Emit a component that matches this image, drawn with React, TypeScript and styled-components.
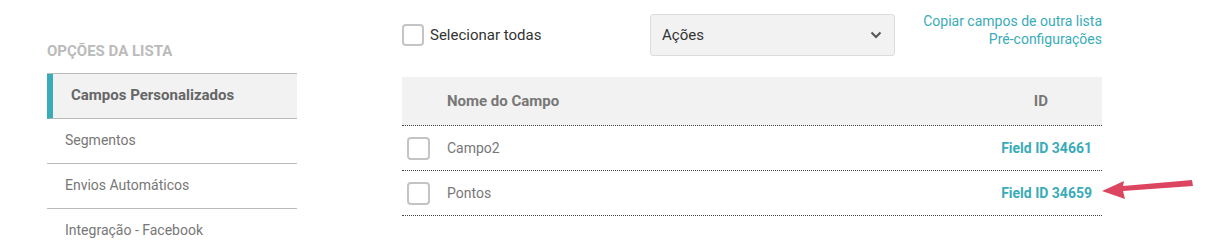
import React from "react";
import styled, { createGlobalStyle } from "styled-components";

const Global = createGlobalStyle`
  html, body { margin: 0; padding: 0; background: #fff; }
  body { font-family: Roboto, "Liberation Sans", Arial, sans-serif; }
  * { box-sizing: border-box; }
`;

const teal = "#3aabb8";

const Page = styled.div`
  position: relative;
  display: flex;
  align-items: flex-start;
  width: 1218px;
  height: 242px;
  overflow: hidden;
  padding-left: 47px;
`;

const Sidebar = styled.nav`
  width: 250px;
  padding-top: 42px;
`;

const SideTitle = styled.div`
  font-size: 15px;
  font-weight: 700;
  color: #bbbbbb;
  line-height: 18px;
  text-transform: uppercase;
  margin-bottom: 13px;
`;

const SideList = styled.ul`
  list-style: none;
  margin: 0;
  padding: 0;
  border-top: 1px solid #bbbbbb;
`;

const SideItem = styled.li<{ $active?: boolean }>`
  height: 45px;
  display: flex;
  align-items: center;
  padding-bottom: 2px;
  font-size: ${(p) => (p.$active ? "15px" : "14px")};
  border-bottom: 1px solid #bbbbbb;
  color: ${(p) => (p.$active ? "#666" : "#777")};
  font-weight: ${(p) => (p.$active ? 700 : 400)};
  background: ${(p) => (p.$active ? "#f2f2f2" : "transparent")};
  padding-left: 18px;
  border-left: ${(p) => (p.$active ? `6px solid ${teal}` : "0")};
`;

const Main = styled.main`
  margin-left: 105px;
  width: 700px;
`;

const Toolbar = styled.div`
  display: grid;
  grid-template-columns: 248px 245px 1fr;
  align-items: start;
  padding-top: 12px;
`;

const CheckLabel = styled.label`
  display: flex;
  align-items: center;
  gap: 6px;
  margin-top: 12px;
  font-size: 15px;
  color: #333;
`;

const Box = styled.span<{ $size?: number }>`
  display: inline-block;
  width: ${(p) => p.$size ?? 22}px;
  height: ${(p) => p.$size ?? 22}px;
  border: 2px solid #c4c4c4;
  border-radius: 4px;
  background: #fff;
  flex: none;
`;

const Select = styled.div`
  margin-top: 2px;
  height: 42px;
  background: #f2f2f2;
  border: 1px solid #dcdcdc;
  border-radius: 3px;
  display: flex;
  align-items: center;
  justify-content: space-between;
  padding: 0 12px 0 11px;
  font-size: 15px;
  color: #333;
`;

const Links = styled.div`
  display: flex;
  flex-direction: column;
  align-items: flex-end;
  font-size: 14px;
  line-height: 18px;
`;

const Link = styled.a`
  color: ${teal};
  text-decoration: none;
`;

const Table = styled.div`
  margin-top: 21px;
`;

const HeadRow = styled.div`
  display: flex;
  align-items: center;
  height: 49px;
  background: #f2f2f2;
  border-bottom: 1px dotted #444;
  font-size: 15px;
  font-weight: 700;
  color: #777;
`;

const Row = styled.div`
  display: flex;
  align-items: center;
  height: 45px;
  border-bottom: 1px dotted #444;
  font-size: 14px;
  color: #777;
`;

const CheckCell = styled.div`
  width: 45px;
  padding-left: 5px;
  display: flex;
  align-items: center;
`;

const NameCell = styled.div`
  flex: 1;
`;

const IdHead = styled.div`
  padding-right: 54px;
`;

const IdCell = styled.div`
  padding-right: 10px;
  font-weight: 700;
  color: ${teal};
`;

const Arrow = styled.svg`
  position: absolute;
  left: 1098px;
  top: 176px;
`;

const Chevron = () => (
  <svg width="12" height="8" viewBox="0 0 12 8">
    <path d="M1.5 1.5 L6 6 L10.5 1.5" fill="none" stroke="#555" strokeWidth="2" />
  </svg>
);

const rows = [
  { name: "Campo2", id: "Field ID 34661" },
  { name: "Pontos", id: "Field ID 34659" },
];

export default function App() {
  return (
    <>
      <Global />
      <Page>
        <Sidebar>
          <SideTitle>Opções da lista</SideTitle>
          <SideList>
            <SideItem $active>Campos Personalizados</SideItem>
            <SideItem>Segmentos</SideItem>
            <SideItem>Envios Automáticos</SideItem>
            <SideItem>Integração - Facebook</SideItem>
          </SideList>
        </Sidebar>
        <Main>
          <Toolbar>
            <CheckLabel>
              <Box $size={22} />
              Selecionar todas
            </CheckLabel>
            <Select>
              <span>Ações</span>
              <Chevron />
            </Select>
            <Links>
              <Link href="#">Copiar campos de outra lista</Link>
              <Link href="#">Pré-configurações</Link>
            </Links>
          </Toolbar>
          <Table>
            <HeadRow>
              <CheckCell />
              <NameCell>Nome do Campo</NameCell>
              <IdHead>ID</IdHead>
            </HeadRow>
            {rows.map((r) => (
              <Row key={r.id}>
                <CheckCell>
                  <Box $size={23} />
                </CheckCell>
                <NameCell>{r.name}</NameCell>
                <IdCell>{r.id}</IdCell>
              </Row>
            ))}
          </Table>
        </Main>
        <Arrow width="100" height="28" viewBox="0 0 100 28">
          <path d="M4 15 L26 5 L25 10 L94 4 L95 10 L25 15 L27 23 Z" fill="#dc4560" />
        </Arrow>
      </Page>
    </>
  );
}
